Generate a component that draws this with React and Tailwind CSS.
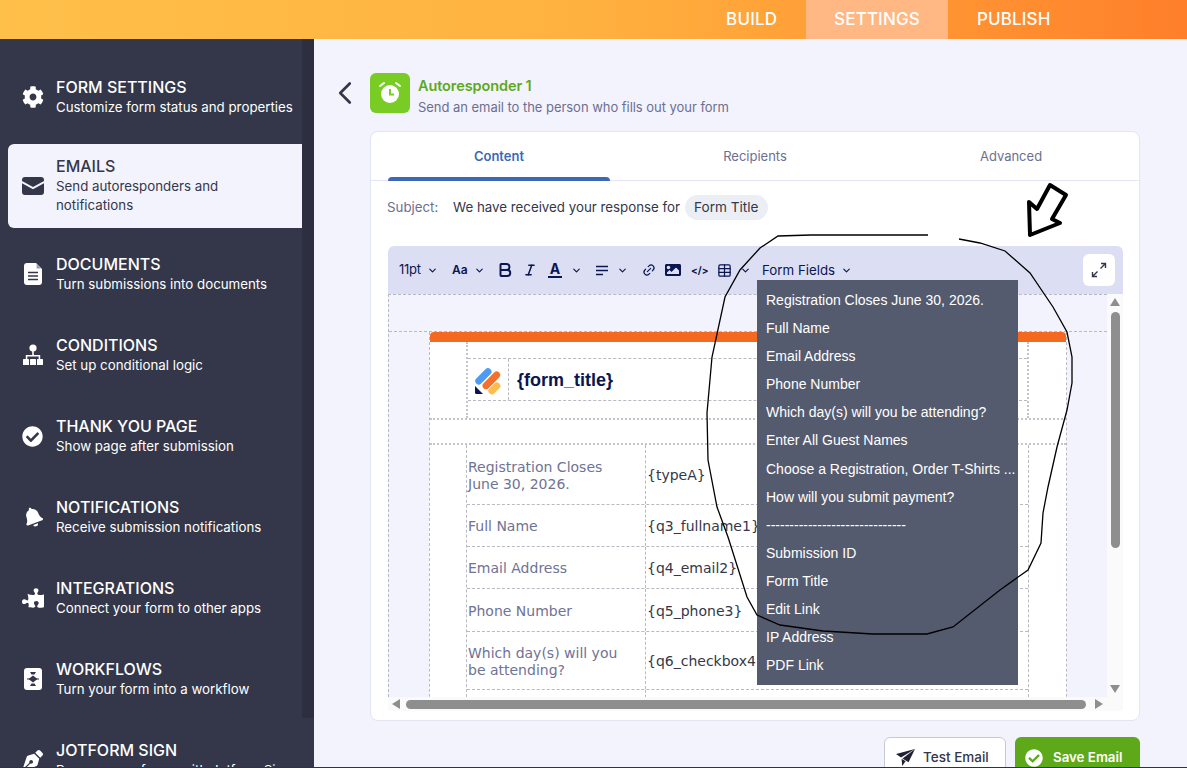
import React from 'react';
import { ChevronDown, ChevronLeft, Bold, Italic, Link2, Table } from 'lucide-react';
import { FaCog, FaCheckCircle, FaBell, FaPuzzlePiece, FaPenNib, FaImage } from 'react-icons/fa';

const EnvelopeIcon = () => (
  <svg width="22" height="18" viewBox="0 0 22 18">
    <path d="M3 0h16a3 3 0 0 1 3 3v1l-11 6L0 4V3a3 3 0 0 1 3-3z" fill="#343749" />
    <path d="M0 6.2l11 6 11-6V15a3 3 0 0 1-3 3H3a3 3 0 0 1-3-3z" fill="#343749" />
  </svg>
);

const DocumentIcon = () => (
  <svg width="18" height="22" viewBox="0 0 18 22">
    <path d="M3 0h9l6 6v13a3 3 0 0 1-3 3H3a3 3 0 0 1-3-3V3a3 3 0 0 1 3-3z" fill="#fff" />
    <path d="M4 9.5h10M4 13h10M4 16.5h10" stroke="#343749" strokeWidth="1.6" />
    <path d="M12.6 1l4.4 4.4h-4.4z" fill="#343749" opacity="0.5" />
  </svg>
);

const ConditionsIcon = () => (
  <svg width="20" height="22" viewBox="0 0 20 22" fill="#fff">
    <circle cx="10" cy="4" r="3.6" />
    <path d="M9.2 6h1.6v5h6.4v5h-1.5v-3.5H4.3V16H2.8v-5h6.4z" />
    <rect x="0" y="15" width="6" height="6" rx="0.6" />
    <rect x="7" y="15" width="6" height="6" rx="0.6" />
    <rect x="14" y="15" width="6" height="6" rx="0.6" />
  </svg>
);

const WorkflowIcon = () => (
  <svg width="18" height="22" viewBox="0 0 18 22">
    <rect width="18" height="22" rx="3" fill="#fff" />
    <path d="M6 4h6l-1.5 2.6h-3zM9 7.5l4.5 3.5L9 14.5 4.5 11zM7.5 15.4h3L12 18H6z" fill="#343749" />
    <path d="M3 11h12" stroke="#343749" strokeWidth="1" />
  </svg>
);

const PlaneIcon = () => (
  <svg width="19" height="17" viewBox="0 0 19 17" fill="#1f2133">
    <path d="M19 0L0 5l5 3.6z" />
    <path d="M19 0L6.5 9.6l6 3.6z" />
    <path d="M5.6 9.8L9.6 12.2 6.2 17z" />
  </svg>
);

const navItems = [
  { title: 'FORM SETTINGS', sub: 'Customize form status and properties', icon: <FaCog size={22} /> },
  { title: 'EMAILS', sub: 'Send autoresponders and notifications', icon: <EnvelopeIcon />, active: true },
  { title: 'DOCUMENTS', sub: 'Turn submissions into documents', icon: <DocumentIcon /> },
  { title: 'CONDITIONS', sub: 'Set up conditional logic', icon: <ConditionsIcon /> },
  { title: 'THANK YOU PAGE', sub: 'Show page after submission', icon: <FaCheckCircle size={21} /> },
  { title: 'NOTIFICATIONS', sub: 'Receive submission notifications', icon: <FaBell size={20} className="-rotate-[20deg]" /> },
  { title: 'INTEGRATIONS', sub: 'Connect your form to other apps', icon: <FaPuzzlePiece size={22} className="-scale-x-100" /> },
  { title: 'WORKFLOWS', sub: 'Turn your form into a workflow', icon: <WorkflowIcon /> },
  { title: 'JOTFORM SIGN', sub: 'Prepare your forms with Jotform Sign', icon: <FaPenNib size={20} /> },
];

const fieldItems = [
  'Registration Closes June 30, 2026.',
  'Full Name',
  'Email Address',
  'Phone Number',
  'Which day(s) will you be attending?',
  'Enter All Guest Names',
  'Choose a Registration, Order T-Shirts ...',
  'How will you submit payment?',
  '------------------------------',
  'Submission ID',
  'Form Title',
  'Edit Link',
  'IP Address',
  'PDF Link',
];

const tableRows = [
  { label: 'Registration Closes June 30, 2026.', value: '{typeA}', h: 'h-[60px]' },
  { label: 'Full Name', value: '{q3_fullname1}', h: 'h-[42px]' },
  { label: 'Email Address', value: '{q4_email2}', h: 'h-[42px]' },
  { label: 'Phone Number', value: '{q5_phone3}', h: 'h-[43px]' },
  { label: 'Which day(s) will you be attending?', value: '{q6_checkbox4}', h: 'h-[58px]' },
  { label: '', value: '', h: 'h-[42px]' },
];

const JotformLogo = () => (
  <svg width="28" height="30" viewBox="0 0 28 30">
    <rect x="-1" y="8" width="20" height="7" rx="3.5" transform="rotate(-45 9 11)" fill="#4c9cf5" />
    <rect x="6" y="12" width="22" height="7" rx="3.5" transform="rotate(-45 17 15)" fill="#f4702b" />
    <rect x="13" y="20" width="14" height="7" rx="3.5" transform="rotate(-45 20 23)" fill="#fbbd4b" />
    <path d="M1 21l8 8H2.5A1.5 1.5 0 0 1 1 27.5z" fill="#0a1551" />
  </svg>
);

const Sidebar = () => (
  <aside className="flex w-[314px] shrink-0 bg-[#343749]">
    <nav className="w-[302px] shrink-0 pt-[18px] overflow-hidden">
      {navItems.map((item) => (
        <div
          key={item.title}
          className={
            item.active
              ? 'flex items-center ml-2 h-[84px] my-[6px] bg-[#f3f3fe] rounded-l-md text-[#343749]'
              : 'flex items-center ml-2 h-[80.9px] text-white'
          }
        >
          <div className="w-[48px] pl-[1px] flex justify-center shrink-0">{item.icon}</div>
          <div className="min-w-0 pt-[1px]">
            <div className="text-[16px] leading-[19px] font-medium">{item.title}</div>
            <div className={item.active ? 'mt-[1px] text-[13.3px] leading-[19px] w-[200px]' : 'mt-[1px] text-[13.3px] leading-[19px] w-[245px]'}>{item.sub}</div>
          </div>
        </div>
      ))}
    </nav>
    <div className="w-3">
      <div className="h-[679px] bg-[#2d2f40]" />
    </div>
  </aside>
);

const Toolbar = () => (
  <div className="flex items-center h-[48px] bg-[#dcdff3] rounded-t-md pl-[11px] pr-2 text-[#0a1551]">
    <span className="text-[13px] w-[25px] -tracking-[0.3px]">11pt</span>
    <ChevronDown size={11} strokeWidth={2.5} className="ml-[3px]" />
    <span className="text-[12px] font-semibold ml-[14px] w-[15px]">Aa</span>
    <ChevronDown size={11} strokeWidth={2.5} className="ml-[7px]" />
    <Bold size={18} strokeWidth={2.6} className="ml-[11px]" />
    <Italic size={14} strokeWidth={2.6} className="ml-[9px]" />
    <span className="ml-[11px] w-[14px] h-[16px] text-[14px] leading-[13px] font-bold text-center border-b-2 border-[#0a1551]">A</span>
    <ChevronDown size={11} strokeWidth={2.5} className="ml-[9px]" />
    <svg width="14" height="11" viewBox="0 0 14 11" className="ml-[13px]" stroke="#0a1551" strokeWidth="1.6">
      <path d="M1 1.5h12M1 5.5h12M1 9.5h7" />
    </svg>
    <ChevronDown size={11} strokeWidth={2.5} className="ml-[8px]" />
    <Link2 size={14} strokeWidth={2} className="ml-[14px] -rotate-45" />
    <FaImage size={16} className="ml-[9px]" />
    <span className="ml-[10px] text-[10px] font-bold w-[15px]">&lt;/&gt;</span>
    <Table size={15} strokeWidth={2} className="ml-[11px]" />
    <ChevronDown size={11} strokeWidth={2.5} className="ml-[8px]" />
    <span className="ml-[11px] text-[13.3px] pt-[1px]">Form Fields</span>
    <ChevronDown size={11} strokeWidth={2.5} className="ml-[6px] mt-[1px]" />
    <button className="ml-auto w-8 h-8 bg-white rounded-md flex items-center justify-center">
      <svg width="16" height="16" viewBox="0 0 16 16" fill="none" stroke="#343749" strokeWidth="1.4">
        <path d="M10 1.5h4.5V6M14.5 1.5L9.5 6.5M6 14.5H1.5V10M1.5 14.5l5-5" />
      </svg>
    </button>
  </div>
);

const EmailBody = () => (
  <div className="flex-1 min-w-0 h-[403px] overflow-hidden bg-[#f3f3fe] border-l border-t border-dashed border-[#b9b9c2]">
    <div className="h-[37px] border-b border-dashed border-[#b9b9c2]" />
    <div className="ml-[40px] w-[638px] bg-white border-x border-dashed border-[#b9b9c2]">
      <div className="h-[10px] bg-[#f4681f] rounded-t-sm" />
      <div className="ml-[36px] mr-[37px] border-x-2 border-dotted border-[#c4c4cc] h-[76px] pt-[16px]">
        <div className="flex h-[43px] border-y border-dashed border-[#b9b9c2]">
          <div className="w-[41px] flex items-center justify-center border-r border-dashed border-[#b9b9c2]">
            <JotformLogo />
          </div>
          <div className="pl-[8px] pt-[1px] flex items-center text-[18px] font-bold text-[#0a1551] font-['Liberation_Sans',sans-serif]">
            {'{form_title}'}
          </div>
        </div>
      </div>
      <div className="h-[27px] border-y-2 border-dotted border-[#c4c4cc]" />
      <div className="ml-[36px] mr-[37px] border-x border-dashed border-[#b9b9c2] font-['DejaVu_Sans',sans-serif] text-[14px] leading-[17px]">
        {tableRows.map((row, i) => (
          <div key={i} className={`flex items-center border-b border-dashed border-[#b9b9c2] ${row.h}`}>
            <div className="w-[179px] h-full flex items-center pt-[2px] pl-[1px] pr-[17px] text-[#6f7394] border-r border-dashed border-[#b9b9c2]">
              {row.label}
            </div>
            <div className="pl-[1px] pt-[2px] text-[#343749]">{row.value}</div>
          </div>
        ))}
      </div>
    </div>
  </div>
);

const VScrollbar = () => (
  <div className="w-[16px] shrink-0 flex flex-col items-center bg-[#fafafa] pt-[4px]">
    <div className="w-0 h-0 border-x-[5px] border-x-transparent border-b-[8px] border-b-[#8e8e8e]" />
    <div className="w-[9px] h-[236px] mt-[6px] rounded-full bg-[#8e8e8e]" />
    <div className="mt-auto mb-[4px] w-0 h-0 border-x-[5px] border-x-transparent border-t-[8px] border-t-[#8e8e8e]" />
  </div>
);

const HScrollbar = () => (
  <div className="h-[14px] flex items-center bg-[#fafafa] pl-[4px]">
    <div className="w-0 h-0 border-y-[5px] border-y-transparent border-r-[8px] border-r-[#8e8e8e]" />
    <div className="ml-[6px] w-[680px] h-[9px] rounded-full bg-[#8e8e8e]" />
    <div className="ml-[9px] w-0 h-0 border-y-[5px] border-y-transparent border-l-[8px] border-l-[#8e8e8e]" />
  </div>
);

const FormFieldsMenu = () => (
  <div className="absolute left-[369px] top-[34px] w-[261px] h-[405px] bg-[#555b6e] pt-[6px] pl-[9px] font-['Liberation_Sans',sans-serif] text-[14px] text-white">
    {fieldItems.map((f) => (
      <div key={f} className="h-[28.1px] leading-[28px] whitespace-nowrap">{f}</div>
    ))}
  </div>
);

const Annotation = () => (
  <svg className="absolute inset-0 pointer-events-none" width="1187" height="768" viewBox="0 0 1187 768" fill="none" stroke="#000">
    <polyline
      strokeWidth="1.3"
      points="928,235 811,235 778,236 760,248 740,270 725,297 712,357 707,413 708,460 717,507 728,537 747,597 757,615 780,625 823,631 873,634 927,634 953,627 1000,590 1028,570 1041,543 1043,513 1048,487 1057,447 1067,410 1072,383 1072,357 1067,332 1053,307 1030,273 1005,251 980,243 959,239"
    />
    <path d="M1050 185l16 10-14 24 8 4-30 12-1-33 8 7z" strokeWidth="4" strokeLinejoin="round" />
  </svg>
);

const App = () => {
  return (
    <div className="relative h-screen w-full overflow-hidden flex flex-col bg-[#f3f3fe] border-b border-[#333] font-['Inter',sans-serif]">
      <header className="h-[39px] shrink-0 flex justify-end pr-[108px] bg-gradient-to-r from-[#ffc04a] via-[#ffb13f] to-[#ff7f2a] text-white text-[17px] font-medium tracking-[0.15px]">
        <div className="px-[28.5px] flex items-center">BUILD</div>
        <div className="px-[28.5px] flex items-center bg-[#ffb783]">SETTINGS</div>
        <div className="px-[28.5px] flex items-center">PUBLISH</div>
      </header>
      <div className="flex flex-1 min-h-0">
        <Sidebar />
        <main className="flex-1 min-w-0 pt-[34px] pl-[56px] pr-[47px] relative">
          <div className="flex items-center h-[40px]">
            <ChevronLeft size={38} strokeWidth={1.7} className="absolute left-[12px] text-[#343749]" />
            <div className="w-10 h-10 rounded-md bg-[#78cc24] flex items-center justify-center">
              <svg width="24" height="24" viewBox="0 0 24 24">
                <circle cx="12" cy="13" r="9" fill="#fff" />
                <path d="M12 8v5.5h4" fill="none" stroke="#78cc24" strokeWidth="2" />
                <path d="M2 5l4-3M22 5l-4-3" stroke="#fff" strokeWidth="2" strokeLinecap="round" />
              </svg>
            </div>
            <div className="ml-2 pt-[6px]">
              <div className="text-[14.5px] leading-[20px] font-semibold text-[#5ea91a] -tracking-[0.1px]">Autoresponder 1</div>
              <div className="text-[13px] leading-[20px] mt-[1px] text-[#6c6f8f] -tracking-[0.04px]">Send an email to the person who fills out your form</div>
            </div>
          </div>

          <section className="mt-[18px] h-[590px] w-[770px] bg-white border border-[#e3e5f5] rounded-lg">
            <div className="flex h-[49px] border-b border-[#e3e5f5] text-[13px] text-[#6c6f8f]">
              <div className="relative w-[256px] flex items-center justify-center pt-[1px] font-semibold text-[#3e68b5]">
                Content
                <div className="absolute left-[17px] right-[17px] -bottom-px h-1 bg-[#3e68b5] rounded-t-sm" />
              </div>
              <div className="w-[256px] flex items-center justify-center pt-[1px]">Recipients</div>
              <div className="w-[256px] flex items-center justify-center pt-[1px]">Advanced</div>
            </div>

            <div className="flex items-center h-[25px] mt-[14px] ml-4 text-[13.3px]">
              <span className="w-[66px] text-[#6c6f8f]">Subject:</span>
              <span className="text-[#343749]">We have received your response for</span>
              <span className="ml-[5px] h-[25px] px-[9px] flex items-center rounded-full bg-[#eceef5] text-[#343749] text-[13.6px]">Form Title</span>
            </div>

            <div className="relative mt-[26px] mx-[17px] w-[735px] rounded-md">
              <Toolbar />
              <div className="flex">
                <EmailBody />
                <VScrollbar />
              </div>
              <HScrollbar />
              <FormFieldsMenu />
            </div>
          </section>

          <div className="flex justify-end gap-[9px] mt-4 w-[770px]">
            <button className="w-[122px] h-[41px] flex items-center pl-[11px] gap-[8px] bg-white border border-[#c8c8d8] rounded-md text-[13.5px] font-medium text-[#343749]">
              <PlaneIcon />
              Test Email
            </button>
            <button className="w-[125px] h-[41px] flex items-center pl-[10px] gap-[10px] bg-[#5ea91a] rounded-md text-[13.3px] font-semibold text-white">
              <FaCheckCircle size={18} />
              Save Email
            </button>
          </div>
        </main>
      </div>
      <Annotation />
    </div>
  );
};

export default App;
